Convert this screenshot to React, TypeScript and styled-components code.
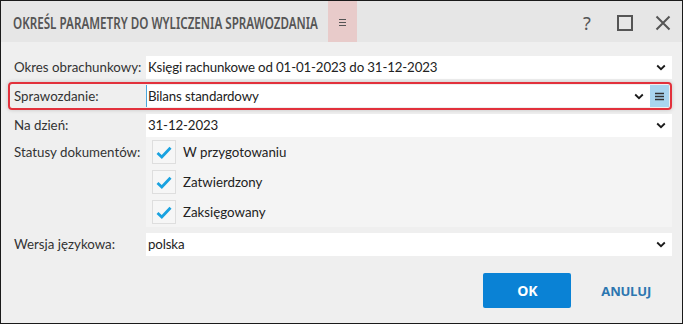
import React from "react";
import styled, { createGlobalStyle } from "styled-components";

const Global = createGlobalStyle`
  html, body { margin: 0; padding: 0; background: #ffffff; }
  * { box-sizing: border-box; }
`;

const Frame = styled.div`
  width: 683px;
  height: 324px;
  border: 1px solid #1a1a1a;
  background: #efefef;
  display: flex;
  flex-direction: column;
  font-family: "Lato", "Noto Sans", sans-serif;
  color: #333;
`;

const TitleBar = styled.div`
  height: 41px;
  background: #e6e6e6;
  display: flex;
  align-items: stretch;
  padding-left: 12px;
`;

const Title = styled.div`
  width: 306px;
  display: flex;
  align-items: center;
  padding-top: 3px;
  overflow: visible;
`;

const TitleText = styled.span`
  display: inline-block;
  font-family: "Noto Sans", "Lato", sans-serif;
  font-weight: 600;
  font-size: 16px;
  color: #555;
  white-space: nowrap;
  transform: scaleX(0.728);
  transform-origin: left center;
`;

const TitleMenu = styled.div`
  width: 29px;
  margin-left: 9px;
  background: #e8cbca;
  display: flex;
  align-items: center;
  justify-content: center;
  padding-top: 2px;
`;

const TitleTools = styled.div`
  margin-left: auto;
  display: flex;
  align-items: center;
  padding-right: 0;
  padding-top: 2px;
`;

const ToolButton = styled.div`
  width: 38px;
  height: 100%;
  display: flex;
  align-items: center;
  justify-content: center;
  color: #555;
`;

const QMark = styled.span`
  font-family: "Noto Sans", sans-serif;
  font-size: 18px;
  color: #555;
  line-height: 1;
`;

const Body = styled.div`
  flex: 1;
  display: flex;
  flex-direction: column;
  padding: 13px 10px 0 6px;
`;

const Row = styled.div<{ $highlight?: boolean; $top?: number }>`
  display: grid;
  grid-template-columns: 132px 1fr;
  align-items: center;
  padding: 0 ${(p) => (p.$highlight ? "1px" : "0")} 0 ${(p) => (p.$highlight ? "4px" : "5px")};
  border: ${(p) => (p.$highlight ? "2px solid #e2313c" : "0")};
  border-radius: 4px;
  margin: ${(p) => (p.$highlight ? "3px 0 3px 1px" : `${p.$top ?? 0}px 0 0 2px`)};
  height: ${(p) => (p.$highlight ? "28px" : "24px")};
  box-shadow: ${(p) => (p.$highlight ? "0 0 4px rgba(0,0,0,0.18)" : "none")};
`;

const Label = styled.div`
  font-size: 13.3px;
  color: #333;
  white-space: nowrap;
`;

const Select = styled.div<{ $focused?: boolean }>`
  height: ${(p) => (p.$focused ? "22px" : "23px")};
  background: #fff;
  display: flex;
  align-items: center;
  border-left: ${(p) => (p.$focused ? "1.5px solid #4aa7dd" : "0")};
  padding-left: ${(p) => (p.$focused ? "1px" : "2px")};
`;

const SelectText = styled.div`
  flex: 1;
  font-size: 13.3px;
  letter-spacing: -0.15px;
  color: #222;
  white-space: nowrap;
`;

const Chevron = styled.div`
  width: 22px;
  display: flex;
  justify-content: center;
  align-items: center;
`;

const SideMenu = styled.div`
  width: 19px;
  height: 100%;
  background: #a9d5ef;
  display: flex;
  align-items: center;
  justify-content: center;
`;

const CheckRow = styled.div`
  display: grid;
  grid-template-columns: 132px 1fr;
  padding-left: 5px;
  margin: 0 0 0 2px;
`;

const StatusLabel = styled(Label)`
  align-self: start;
  padding-top: 7px;
`;

const CheckPanel = styled.div`
  background: #f4f4f4;
  display: flex;
  flex-direction: column;
  gap: 6px;
  padding: 3px 0 3px 6px;
`;

const CheckItem = styled.div`
  display: flex;
  align-items: center;
  gap: 7px;
`;

const Box = styled.div`
  width: 24px;
  height: 24px;
  border: 1px solid #dedede;
  background: #f6f6f6;
  display: flex;
  align-items: center;
  justify-content: center;
`;

const CheckText = styled.span`
  font-size: 13.3px;
  color: #222;
`;

const Footer = styled.div`
  display: flex;
  justify-content: flex-end;
  align-items: center;
  gap: 30px;
  margin-top: 17px;
  padding-right: 21px;
`;

const OkButton = styled.div`
  width: 88px;
  height: 35px;
  background: #0a82d5;
  border-radius: 2px;
  color: #fff;
  font-family: "Open Sans", "Noto Sans", sans-serif;
  font-weight: 700;
  font-size: 14px;
  display: flex;
  align-items: center;
  justify-content: center;
`;

const CancelButton = styled.div`
  color: #2c76b0;
  font-family: "Open Sans", "Noto Sans", sans-serif;
  font-weight: 700;
  font-size: 13px;
  letter-spacing: -0.2px;
`;

const ChevronIcon = () => (
  <svg width="10" height="7" viewBox="0 0 10 7">
    <path d="M1.2 1.5 L5 5.2 L8.8 1.5" fill="none" stroke="#1a1a1a" strokeWidth="1.8" />
  </svg>
);

const MenuIcon = ({ w = 8, color = "#444", sw = 1 }: { w?: number; color?: string; sw?: number }) => (
  <svg width={w} height="9" viewBox={`0 0 ${w} 9`}>
    <path d={`M0 1.5H${w}M0 4.5H${w}M0 7.5H${w}`} stroke={color} strokeWidth={sw} />
  </svg>
);

const CheckIcon = () => (
  <svg width="16" height="13" viewBox="0 0 16 13">
    <path d="M1.5 7 L5.8 11 L14.5 1.8" fill="none" stroke="#19a2e0" strokeWidth="2.8" strokeLinejoin="miter" />
  </svg>
);

type SelectRowProps = { label: string; value: string; highlight?: boolean; top?: number };

const SelectRow = ({ label, value, highlight, top }: SelectRowProps) => (
  <Row $highlight={highlight} $top={top}>
    <Label>{label}</Label>
    <Select $focused={highlight}>
      <SelectText>{value}</SelectText>
      <Chevron>
        <ChevronIcon />
      </Chevron>
      {highlight && (
        <SideMenu>
          <MenuIcon w={9} color="#333" sw={1.3} />
        </SideMenu>
      )}
    </Select>
  </Row>
);

export default function App() {
  const statuses = ["W przygotowaniu", "Zatwierdzony", "Zaksięgowany"];
  return (
    <>
      <Global />
      <Frame>
        <TitleBar>
          <Title>
            <TitleText>OKREŚL PARAMETRY DO WYLICZENIA SPRAWOZDANIA</TitleText>
          </Title>
          <TitleMenu>
            <MenuIcon w={7} color="#555" sw={1} />
          </TitleMenu>
          <TitleTools>
            <ToolButton>
              <QMark>?</QMark>
            </ToolButton>
            <ToolButton>
              <svg width="16" height="16" viewBox="0 0 16 16">
                <rect x="1" y="1" width="14" height="14" fill="none" stroke="#555" strokeWidth="2" />
              </svg>
            </ToolButton>
            <ToolButton>
              <svg width="16" height="16" viewBox="0 0 16 16">
                <path d="M1.5 1.5 L14.5 14.5 M14.5 1.5 L1.5 14.5" stroke="#555" strokeWidth="2" />
              </svg>
            </ToolButton>
          </TitleTools>
        </TitleBar>
        <Body>
          <SelectRow label="Okres obrachunkowy:" value="Księgi rachunkowe od 01-01-2023 do 31-12-2023" />
          <SelectRow label="Sprawozdanie:" value="Bilans standardowy" highlight />
          <SelectRow label="Na dzień:" value="31-12-2023" />
          <CheckRow>
            <StatusLabel>Statusy dokumentów:</StatusLabel>
            <CheckPanel>
              {statuses.map((s) => (
                <CheckItem key={s}>
                  <Box>
                    <CheckIcon />
                  </Box>
                  <CheckText>{s}</CheckText>
                </CheckItem>
              ))}
            </CheckPanel>
          </CheckRow>
          <SelectRow label="Wersja językowa:" value="polska" top={5} />
          <Footer>
            <OkButton>OK</OkButton>
            <CancelButton>ANULUJ</CancelButton>
          </Footer>
        </Body>
      </Frame>
    </>
  );
}
